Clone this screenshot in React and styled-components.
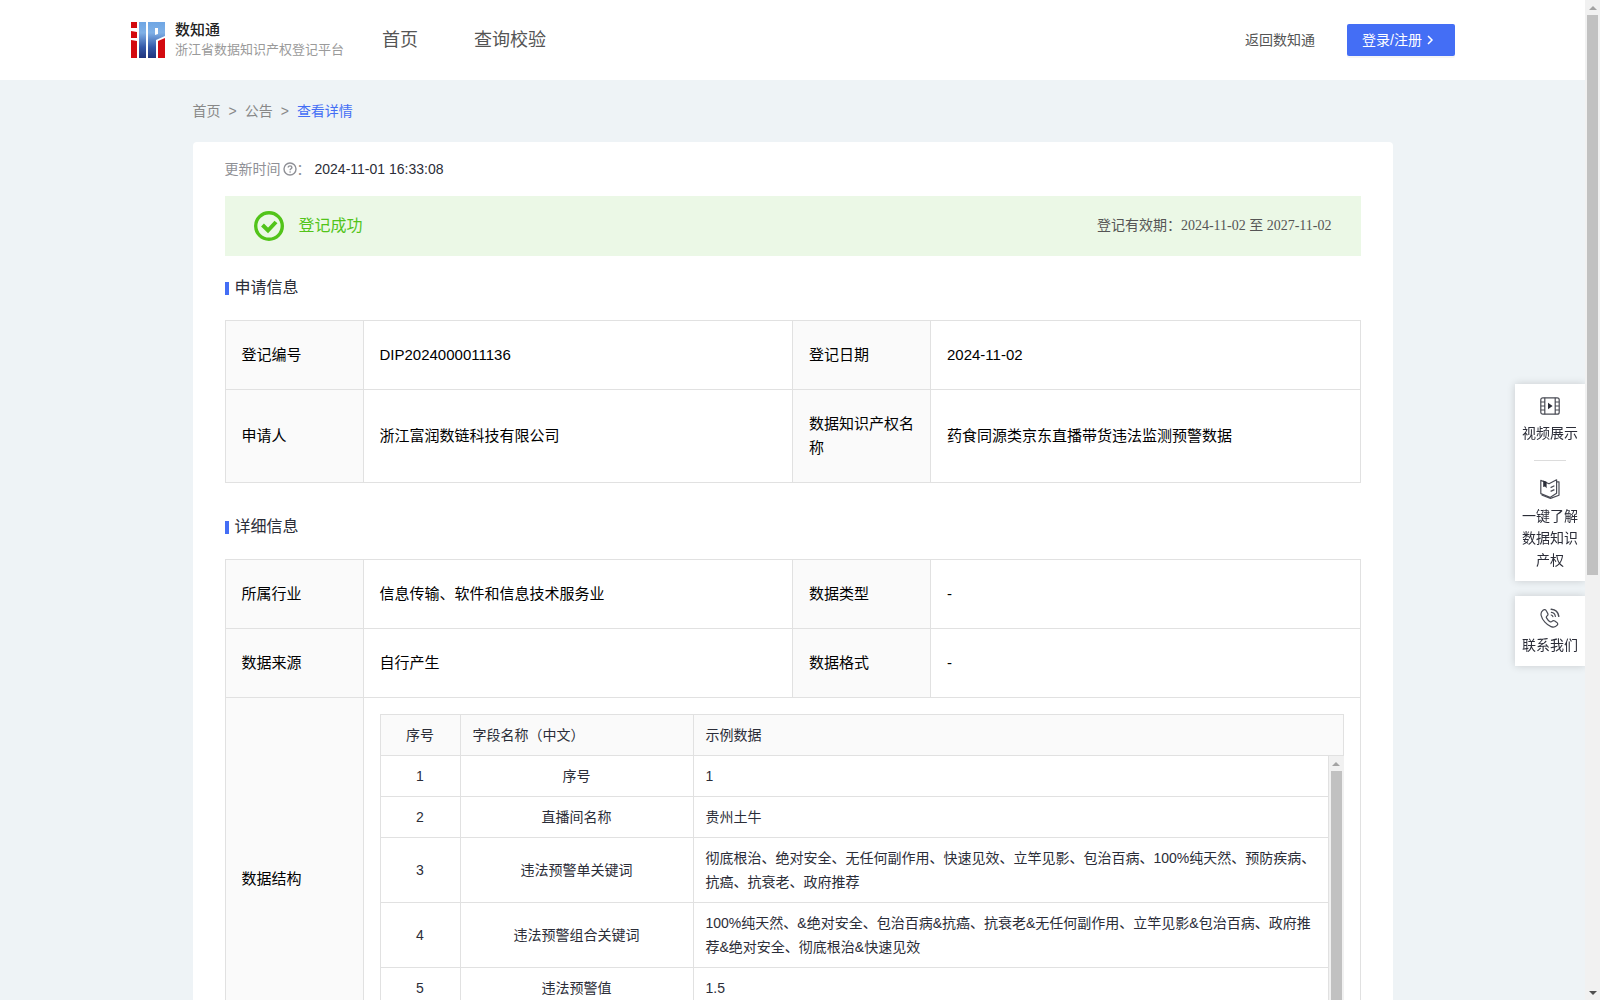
import React from 'react'
import styled, {createGlobalStyle} from 'styled-components'

const GlobalStyle = createGlobalStyle`
  * {
    box-sizing: border-box;
  }
  body {
    margin: 0;
    background: #eef3f6;
    color: #2b2d38;
    font-family: 'Liberation Sans', 'Noto Sans CJK SC', sans-serif;
    font-size: 14px;
    line-height: 24px;
  }
  a {
    color: inherit;
    text-decoration: none;
  }
`

const Shell = styled.div`
  display: flex;
  height: 100vh;
  overflow: hidden;
`

const Page = styled.div`
  flex: 1;
  min-width: 0;
  overflow: hidden;
`

const Header = styled.header`
  display: flex;
  align-items: center;
  height: 80px;
  padding: 0 130px;
  background: #fff;
`

const Brand = styled.a`
  display: flex;
  align-items: center;
  gap: 9px;
`

const BrandName = styled.strong`
  display: block;
  font-size: 15px;
  font-weight: 500;
  line-height: 20px;
  color: #222;
`

const BrandSub = styled.span`
  display: block;
  font-size: 13px;
  line-height: 20px;
  color: #9a9a9a;
`

const Nav = styled.nav`
  display: flex;
  gap: 56px;
  flex: 1;
  margin-left: 38px;
  font-size: 18px;
  color: #555;
`

const BackLink = styled.a`
  margin-right: 32px;
  color: #555;
`

const LoginButton = styled.button`
  display: flex;
  align-items: center;
  gap: 2px;
  width: 108px;
  height: 32px;
  padding: 0 15px;
  border: 0;
  border-radius: 2px;
  background: #446ef5;
  box-shadow: 0 2px 0 rgba(0, 0, 0, 0.04);
  color: #fff;
  font: inherit;
  white-space: nowrap;
`

const Content = styled.main`
  max-width: 1200px;
  margin: 0 auto;
`

const Breadcrumb = styled.nav`
  display: flex;
  align-items: center;
  gap: 8px;
  height: 62px;
  color: #888;
`

const Current = styled.a`
  color: #446ef5;
`

const Card = styled.div`
  padding: 16px 32px 32px;
  border-radius: 4px;
  background: #fff;
`

const UpdateTime = styled.div`
  display: flex;
  align-items: center;
  height: 22px;
  margin-bottom: 16px;
  color: #8f9096;

  svg {
    margin-left: 2px;
  }
  time {
    margin-left: 4px;
    color: #2b2d38;
  }
`

const Banner = styled.div`
  display: flex;
  align-items: center;
  gap: 15px;
  height: 60px;
  padding: 0 29px;
  background: #ebf8e6;
`

const BannerStatus = styled.span`
  flex: 1;
  font-size: 16px;
  color: #52c41a;
`

const BannerPeriod = styled.span`
  font-family: 'Liberation Serif', 'Noto Sans CJK SC', serif;
  color: #555;
`

const SectionTitle = styled.h2`
  display: flex;
  align-items: center;
  gap: 6px;
  margin: ${({first}) => (first ? '20px' : '32px')} 0 20px;
  font-size: 16px;
  font-weight: 400;
  line-height: 24px;

  &::before {
    content: '';
    width: 4px;
    height: 13px;
    background: #446ef5;
  }
`

const InfoTable = styled.table`
  width: 100%;
  table-layout: fixed;
  border-collapse: collapse;
  font-size: 15px;
  color: #000;
`

const LabelCol = styled.col`
  width: 138px;
`

const InfoLabel = styled.th`
  padding: 22px 16px;
  border: 1px solid #e1e1e1;
  background: #fafafa;
  font-weight: 400;
  text-align: left;
`

const InfoValue = styled.td`
  padding: ${({nested}) => (nested ? '16px' : '22px 16px')};
  border: 1px solid #e1e1e1;
`

const FieldBox = styled.div`
  font-size: 14px;
  color: #2b2d38;
`

const FieldBody = styled.div`
  display: flex;
  height: 288px;
`

const FieldScroll = styled.div`
  flex: 1;
  min-width: 0;
  overflow: hidden;
`

const FieldTable = styled.table`
  width: 100%;
  table-layout: fixed;
  border-collapse: separate;
  border-spacing: 0;
  border-left: 1px solid #e1e1e1;
`

const FieldCol = styled.col`
  width: ${({size}) => size};
`

const FieldHead = styled.th`
  padding: 8px 12px;
  border: solid #e1e1e1;
  border-width: 1px 1px 1px 0;
  background: #fafafa;
  font-weight: 400;
  text-align: ${({align}) => align || 'left'};
`

const FieldCell = styled.td`
  padding: 8px 12px;
  border: solid #e1e1e1;
  border-width: 0 1px 1px 0;
  text-align: ${({align}) => align || 'left'};
`

const Bar = styled.div`
  display: flex;
  flex-direction: column;
  flex: none;
  width: 15px;
  background: #f1f1f1;
`

const BarArrow = styled.span`
  display: flex;
  align-items: center;
  justify-content: center;
  height: 15px;

  &::before {
    content: '';
    border: solid transparent;
    border-width: 0 4px;
    border-bottom: ${({down}) => (down ? '0' : '4px solid #a3a3a3')};
    border-top: ${({down}) => (down ? '4px solid #505050' : '0')};
  }
`

const BarTrack = styled.div`
  flex: 1;
  padding: 0 2px;
`

const BarThumb = styled.div`
  height: ${({size}) => size};
  background: #c1c1c1;
`

const Dock = styled.aside`
  position: fixed;
  top: 384px;
  right: 15px;
  display: flex;
  flex-direction: column;
  gap: 15px;
  width: 70px;
  clip-path: inset(-12px 0 -12px -12px);
`

const DockCard = styled.div`
  padding: 12px 7px 10px;
  background: #fff;
  box-shadow: 0 0 8px rgba(0, 0, 0, 0.16);
`

const DockItem = styled.a`
  display: flex;
  flex-direction: column;
  align-items: center;
  gap: 6px;
  line-height: 22px;
  text-align: center;
`

const DockLine = styled.hr`
  width: 32px;
  height: 1px;
  margin: 16px auto 18px;
  border: 0;
  background: #dcdcdc;
`

const Logo = () => (
  <svg width="36" height="36" viewBox="0 0 36 36" aria-hidden="true">
    <defs>
      <linearGradient id="logoBlue" x1="0" y1="0" x2="0" y2="36" gradientUnits="userSpaceOnUse">
        <stop offset="0" stopColor="#6fa6e4" />
        <stop offset="0.3" stopColor="#7fb0e6" />
        <stop offset="0.7" stopColor="#3458a8" />
        <stop offset="1" stopColor="#20347c" />
      </linearGradient>
    </defs>
    <path fill="#d30a10" d="M1 0h6v6H1zM1 9l6 1v6H1zM1 18l6 1v17H1z" />
    <path fill="url(#logoBlue)" d="M9 0h7v36H9z" />
    <path
      fill="url(#logoBlue)"
      d="M18 0h17v14l-9 4v18h-8zM25 6v7l3-1V6z"
      fillRule="evenodd"
    />
    <path fill="#d30a10" d="M28 19l7-3v20h-7z" />
  </svg>
)

const ChevronIcon = () => (
  <svg width="12" height="12" viewBox="0 0 12 12" aria-hidden="true">
    <path d="M4 2l4 4-4 4" fill="none" stroke="#fff" strokeWidth="1.5" />
  </svg>
)

const QuestionIcon = () => (
  <svg width="14" height="14" viewBox="0 0 14 14" aria-hidden="true">
    <g fill="none" stroke="#8f9096" strokeWidth="1.4">
      <circle cx="7" cy="7" r="6" />
      <path d="M5.200 5.600c0-2.400 3.700-2.300 3.700-.1 0 1.300-1.800 1.300-1.800 2.700" />
    </g>
    <circle cx="7.1" cy="10" r="0.8" fill="#8f9096" />
  </svg>
)

const SuccessIcon = () => (
  <svg width="30" height="30" viewBox="0 0 30 30" aria-hidden="true">
    <g fill="none" stroke="#52c41a">
      <circle cx="15" cy="15" r="13.3" strokeWidth="3.4" />
      <path d="M8.500 14l5.500 5.500 8-8.500" strokeWidth="4" />
    </g>
  </svg>
)

const VideoIcon = () => (
  <svg width="20" height="20" viewBox="0 0 20 20" aria-hidden="true">
    <g fill="none" stroke="#4a4c55" strokeWidth="1.2">
      <rect x="0.8" y="1.8" width="18.4" height="16.4" rx="2" />
      <path d="M4.800 1.800v16.400M15.200 1.800v16.400M.8 6h4M.8 10h4M.8 14h4M15.200 6h4M15.200 10h4M15.200 14h4" />
    </g>
    <path d="M8 6.800v6.400l4.600-3.200z" fill="#2b2d38" />
  </svg>
)

const BookIcon = () => (
  <svg width="20" height="20" viewBox="0 0 20 20" aria-hidden="true">
    <g fill="none" stroke="#4a4c55" strokeWidth="1.2" strokeLinejoin="round">
      <path d="M.8 1.400L9 4.800l7.600-4v13.400L10 18.400.8 14.600z" />
      <path d="M16.600 2.800h2.400v13.400L10.500 19.400 1.600 16" />
      <path d="M10.600 8.600l3.800-1.800M10.600 12.400l3.800-1.800" />
    </g>
    <path d="M3.200 1.400l3.400 1.400v6.400L5 7.600 3.200 8z" fill="#2b2d38" />
  </svg>
)

const PhoneIcon = () => (
  <svg width="20" height="20" viewBox="0 0 20 20" aria-hidden="true">
    <g
      fill="none"
      stroke="#4a4c55"
      strokeWidth="1.2"
      strokeLinecap="round"
      strokeLinejoin="round"
    >
      <path d="M3 2.200C1.400 3.400.6 5.200 1.200 7.600c1 4.400 5.600 9.600 9.800 11 2.600.9 4.800.4 6.200-1.400.8-1 .6-2-.4-2.800l-2-1.400c-1-.7-2-.5-2.800.4-.6.7-1.200.8-2 .3-1.400-.9-2.700-2.300-3.500-3.800-.4-.8-.2-1.300.5-1.800 1-.7 1.300-1.600.7-2.700L6.400 3C5.600 1.600 4.300 1.200 3 2.200z" />
      <path d="M11.400 4.400c2.200.3 3.600 1.700 4 3.900" />
      <path d="M11.200 1.200c4.200.3 7 2.900 7.600 7.100" strokeWidth="1.5" />
      <path d="M11.200 7c.9.200 1.500.8 1.700 1.700" />
    </g>
  </svg>
)

const ScrollBar = ({size}) => (
  <Bar aria-hidden="true">
    <BarArrow />
    <BarTrack>
      <BarThumb size={size} />
    </BarTrack>
    <BarArrow down />
  </Bar>
)

const applyRows = [
  ['登记编号', 'DIP2024000011136', '登记日期', '2024-11-02'],
  [
    '申请人',
    '浙江富润数链科技有限公司',
    '数据知识产权名称',
    '药食同源类京东直播带货违法监测预警数据'
  ]
]

const detailRows = [
  ['所属行业', '信息传输、软件和信息技术服务业', '数据类型', '-'],
  ['数据来源', '自行产生', '数据格式', '-']
]

const fields = [
  ['序号', '1'],
  ['直播间名称', '贵州土牛'],
  [
    '违法预警单关键词',
    '彻底根治、绝对安全、无任何副作用、快速见效、立竿见影、包治百病、100%纯天然、预防疾病、抗癌、抗衰老、政府推荐'
  ],
  [
    '违法预警组合关键词',
    '100%纯天然、&绝对安全、包治百病&抗癌、抗衰老&无任何副作用、立竿见影&包治百病、政府推荐&绝对安全、彻底根治&快速见效'
  ],
  ['违法预警值', '1.5']
]

const InfoCols = () => (
  <colgroup>
    <LabelCol />
    <col />
    <LabelCol />
    <col />
  </colgroup>
)

const InfoRows = ({rows}) =>
  rows.map(([label, value, label2, value2]) => (
    <tr key={label}>
      <InfoLabel scope="row">{label}</InfoLabel>
      <InfoValue>{value}</InfoValue>
      <InfoLabel scope="row">{label2}</InfoLabel>
      <InfoValue>{value2}</InfoValue>
    </tr>
  ))

const FieldCols = () => (
  <colgroup>
    <FieldCol size="80px" />
    <FieldCol size="233px" />
    <col />
  </colgroup>
)

const FieldList = () => (
  <FieldBox>
    <FieldTable>
      <FieldCols />
      <thead>
        <tr>
          <FieldHead align="center">序号</FieldHead>
          <FieldHead>字段名称（中文）</FieldHead>
          <FieldHead>示例数据</FieldHead>
        </tr>
      </thead>
    </FieldTable>
    <FieldBody>
      <FieldScroll>
        <FieldTable>
          <FieldCols />
          <tbody>
            {fields.map(([name, sample], i) => (
              <tr key={name}>
                <FieldCell align="center">{i + 1}</FieldCell>
                <FieldCell align="center">{name}</FieldCell>
                <FieldCell>{sample}</FieldCell>
              </tr>
            ))}
          </tbody>
        </FieldTable>
      </FieldScroll>
      <ScrollBar size="100%" />
    </FieldBody>
  </FieldBox>
)

const App = () => (
  <>
    <GlobalStyle />
    <Shell>
      <Page>
        <Header>
          <Brand href="#">
            <Logo />
            <span>
              <BrandName>数知通</BrandName>
              <BrandSub>浙江省数据知识产权登记平台</BrandSub>
            </span>
          </Brand>
          <Nav>
            <a href="#">首页</a>
            <a href="#">查询校验</a>
          </Nav>
          <BackLink href="#">返回数知通</BackLink>
          <LoginButton type="button">
            登录/注册
            <ChevronIcon />
          </LoginButton>
        </Header>
        <Content>
          <Breadcrumb>
            <a href="#">首页</a>
            <span>&gt;</span>
            <a href="#">公告</a>
            <span>&gt;</span>
            <Current href="#">查看详情</Current>
          </Breadcrumb>
          <Card>
            <UpdateTime>
              更新时间
              <QuestionIcon />
              ：<time>2024-11-01 16:33:08</time>
            </UpdateTime>
            <Banner>
              <SuccessIcon />
              <BannerStatus>登记成功</BannerStatus>
              <BannerPeriod>登记有效期：2024-11-02 至 2027-11-02</BannerPeriod>
            </Banner>
            <SectionTitle first>申请信息</SectionTitle>
            <InfoTable>
              <InfoCols />
              <tbody>
                <InfoRows rows={applyRows} />
              </tbody>
            </InfoTable>
            <SectionTitle>详细信息</SectionTitle>
            <InfoTable>
              <InfoCols />
              <tbody>
                <InfoRows rows={detailRows} />
                <tr>
                  <InfoLabel scope="row">数据结构</InfoLabel>
                  <InfoValue colSpan={3} nested>
                    <FieldList />
                  </InfoValue>
                </tr>
              </tbody>
            </InfoTable>
          </Card>
        </Content>
      </Page>
      <ScrollBar size="560px" />
    </Shell>
    <Dock>
      <DockCard>
        <DockItem href="#">
          <VideoIcon />
          视频展示
        </DockItem>
        <DockLine />
        <DockItem href="#">
          <BookIcon />
          一键了解数据知识产权
        </DockItem>
      </DockCard>
      <DockCard>
        <DockItem href="#">
          <PhoneIcon />
          联系我们
        </DockItem>
      </DockCard>
    </Dock>
  </>
)

export default App
